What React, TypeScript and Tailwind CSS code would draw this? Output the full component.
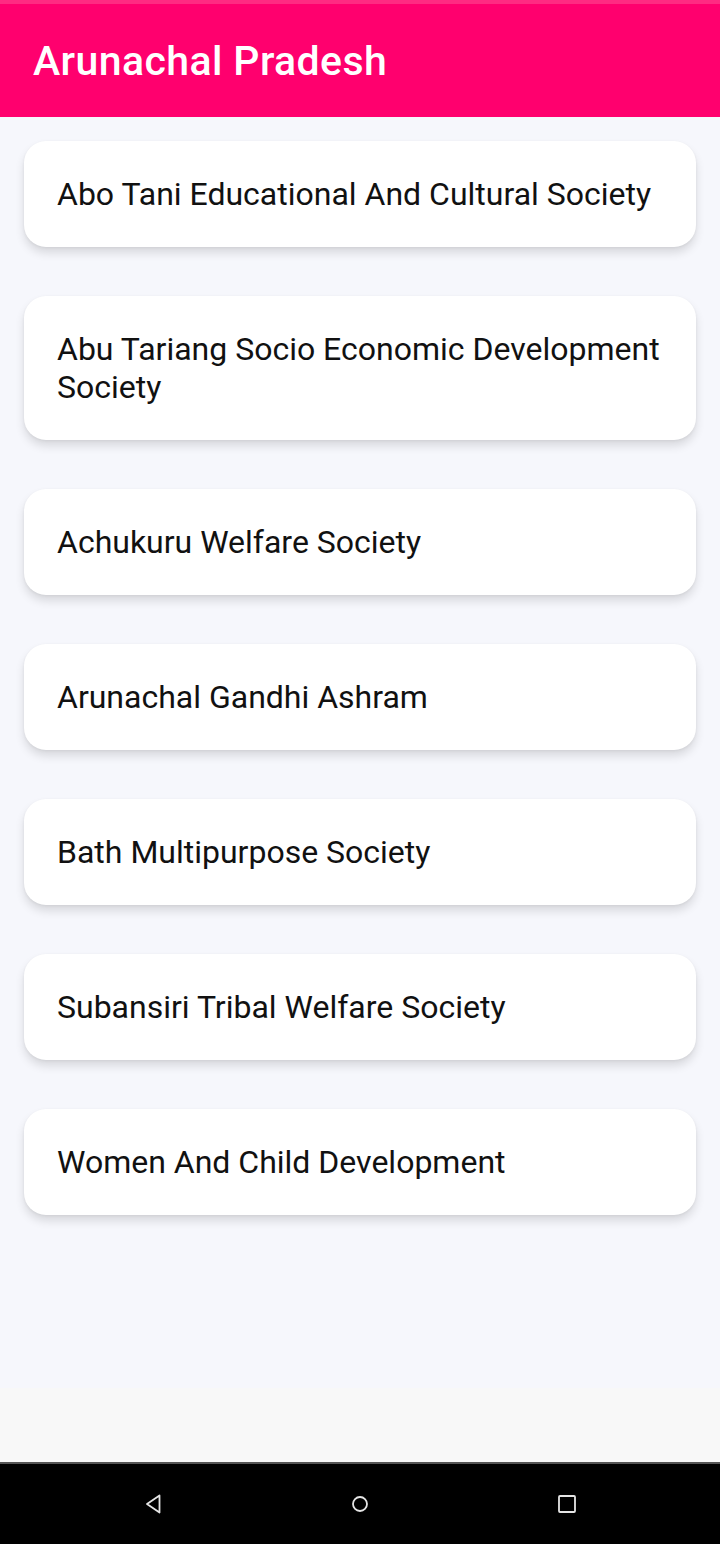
import React from 'react';

const societies: string[] = [
  'Abo Tani Educational And Cultural Society',
  'Abu Tariang Socio Economic Development Society',
  'Achukuru Welfare Society',
  'Arunachal Gandhi Ashram',
  'Bath Multipurpose Society',
  'Subansiri Tribal Welfare Society',
  'Women And Child Development',
];

const SocietyCard: React.FC<{ name: string }> = ({ name }) => (
  <div className="bg-white rounded-[22px] px-[33px] py-[34px] shadow-[0_6px_10px_rgba(0,0,0,0.12),0_1px_3px_rgba(0,0,0,0.06)]">
    <p className="text-[32px] leading-[38px] text-[#111]">{name}</p>
  </div>
);

const App: React.FC = () => {
  return (
    <div className="w-[720px] h-[1544px] flex flex-col bg-[#f8f8f8] font-['Roboto',sans-serif]">
      <header className="h-[117px] bg-[#ff006e] border-t-4 border-[#ff2a82] flex items-center px-[33px] shadow-[0_1px_3px_rgba(0,0,0,0.15)]">
        <h1 className="text-white text-[41px] font-medium tracking-[0.4px] mt-[3px]">
          Arunachal Pradesh
        </h1>
      </header>

      <main className="h-[1271px] bg-[#f6f7fc] px-6 pt-6 flex flex-col gap-[49px]">
        {societies.map((s) => (
          <SocietyCard key={s} name={s} />
        ))}
      </main>

      <div className="flex-1" />

      <nav className="h-[82px] bg-black border-t-2 border-[#555] flex items-center justify-center gap-[183px]">
        <svg width="24" height="24" viewBox="0 0 24 24">
          <path d="M18.5 3.5 L6 12 L18.5 20.5 Z" fill="none" stroke="#e5e5e5" strokeWidth="1.8" strokeLinejoin="round" />
        </svg>
        <svg width="24" height="24" viewBox="0 0 24 24">
          <circle cx="12" cy="12" r="7" fill="none" stroke="#e5e5e5" strokeWidth="1.8" />
        </svg>
        <svg width="24" height="24" viewBox="0 0 24 24">
          <rect x="4" y="4" width="16" height="16" rx="1" fill="none" stroke="#e5e5e5" strokeWidth="1.8" />
        </svg>
      </nav>
    </div>
  );
};

export default App;
